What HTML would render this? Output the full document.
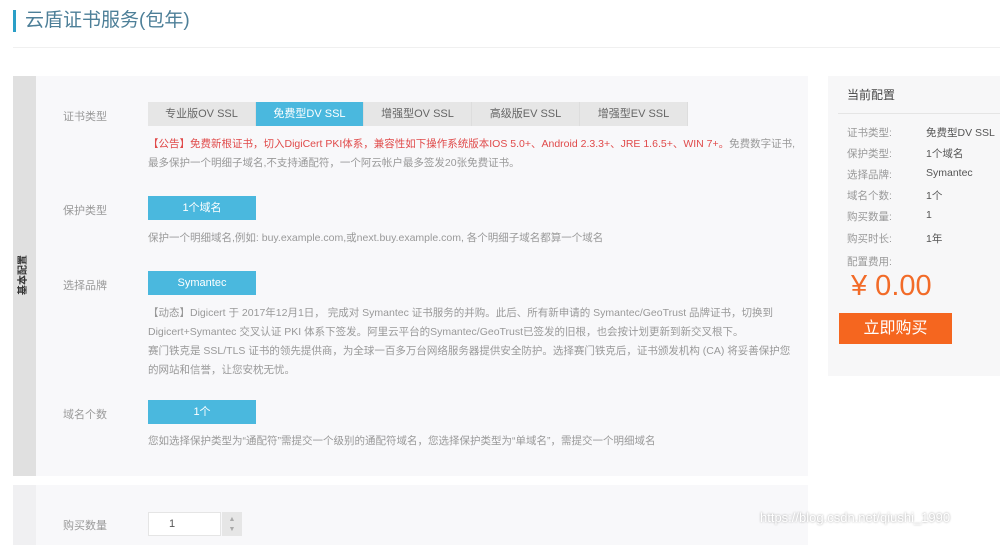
<!DOCTYPE html>
<html><head><meta charset="utf-8"><style>
*{margin:0;padding:0;box-sizing:border-box}
body{width:1000px;height:536px;overflow:hidden;background:#fff;font-family:"Liberation Sans","Noto Sans CJK SC",sans-serif;position:relative;color:#999}
.a{position:absolute}
.title{left:13px;top:10px;height:22px;border-left:3px solid #2a9fc7;padding-left:9px;font-size:19px;color:#4d7f98;line-height:22px}
.hr{left:13px;top:47px;width:987px;height:1px;background:#f0f0f0}
.panel{left:13px;top:76px;width:795px;height:400px;background:#f8f8fa}
.side{left:13px;top:76px;width:23px;height:400px;background:#e0e0e0}
.side span{position:absolute;left:-14px;top:193px;width:50px;text-align:center;transform:rotate(-90deg);font-size:10px;color:#333;font-weight:bold;line-height:12px}
.lbl{font-size:11px;color:#999;left:63px}
.tab{top:102px;height:24px;width:108px;background:#e6e6e6;font-size:11px;color:#666;text-align:center;line-height:24px;border-right:1px solid #ddd}
.on{background:#4ab8de;color:#fff}
.btn{left:148px;width:108px;height:24px;background:#4ab8de;color:#fff;font-size:11px;text-align:center;line-height:24px}
.t{left:148px;font-size:10.5px;line-height:19px;color:#999;width:650px}
.red{color:#e04a4a}
.p2{left:13px;top:485px;width:795px;height:60px;background:#f8f8fa}
.p2s{left:13px;top:485px;width:23px;height:60px;background:#f0f0f2}
.rp{left:828px;top:76px;width:172px;height:300px;background:#f7f7f8}
.rk{left:847px;font-size:10.5px;color:#999}
.rv{left:926px;font-size:10.5px;color:#555}
</style></head><body>
<div class="a title">云盾证书服务(包年)</div>
<div class="a hr"></div>
<div class="a panel"></div>
<div class="a side"><span>基本配置</span></div>
<div class="a lbl" style="top:108px">证书类型</div>
<div class="a tab" style="left:148px">专业版OV SSL</div>
<div class="a tab on" style="left:256px">免费型DV SSL</div>
<div class="a tab" style="left:364px">增强型OV SSL</div>
<div class="a tab" style="left:472px">高级版EV SSL</div>
<div class="a tab" style="left:580px">增强型EV SSL</div>
<div class="a t" style="top:135px"><span class="red">【公告】免费新根证书，切入DigiCert PKI体系，兼容性如下操作系统版本IOS 5.0+、Android 2.3.3+、JRE 1.6.5+、WIN 7+。</span>免费数字证书,最多保护一个明细子域名,不支持通配符，一个阿云帐户最多签发20张免费证书。</div>
<div class="a lbl" style="top:202px">保护类型</div>
<div class="a btn" style="top:196px">1个域名</div>
<div class="a t" style="top:229px">保护一个明细域名,例如: buy.example.com,或next.buy.example.com, 各个明细子域名都算一个域名</div>
<div class="a lbl" style="top:277px">选择品牌</div>
<div class="a btn" style="top:271px">Symantec</div>
<div class="a t" style="top:304px">【动态】Digicert 于 2017年12月1日， 完成对 Symantec 证书服务的并购。此后、所有新申请的 Symantec/GeoTrust 品牌证书，切换到 Digicert+Symantec 交叉认证 PKI 体系下签发。阿里云平台的Symantec/GeoTrust已签发的旧根，也会按计划更新到新交叉根下。<br>赛门铁克是 SSL/TLS 证书的领先提供商，为全球一百多万台网络服务器提供安全防护。选择赛门铁克后，证书颁发机构 (CA) 将妥善保护您的网站和信誉，让您安枕无忧。</div>
<div class="a lbl" style="top:406px">域名个数</div>
<div class="a btn" style="top:400px">1个</div>
<div class="a t" style="top:432px">您如选择保护类型为“通配符”需提交一个级别的通配符域名，您选择保护类型为“单域名”，需提交一个明细域名</div>
<div class="a p2"></div><div class="a p2s"></div>
<div class="a lbl" style="top:517px">购买数量</div>
<div class="a" style="left:148px;top:512px;width:73px;height:24px;background:#fff;border:1px solid #e5e5e5;font-size:11px;color:#555;padding:5px 0 0 20px">1</div>
<div class="a" style="left:222px;top:512px;width:20px;height:24px;background:#e6e6e6;font-size:7px;color:#aaa;text-align:center;line-height:10px;padding-top:3px">▲<br>▼</div>
<div class="a rp"></div>
<div class="a" style="left:847px;top:86px;font-size:12px;color:#444">当前配置</div>
<div class="a" style="left:838px;top:113px;width:162px;height:1px;background:#e5e5e5"></div>
<div class="a rk" style="top:125px">证书类型:</div><div class="a rv" style="top:125px">免费型DV SSL</div>
<div class="a rk" style="top:146px">保护类型:</div><div class="a rv" style="top:146px">1个域名</div>
<div class="a rk" style="top:167px">选择品牌:</div><div class="a rv" style="top:167px">Symantec</div>
<div class="a rk" style="top:188px">域名个数:</div><div class="a rv" style="top:188px">1个</div>
<div class="a rk" style="top:209px">购买数量:</div><div class="a rv" style="top:209px">1</div>
<div class="a rk" style="top:231px">购买时长:</div><div class="a rv" style="top:231px">1年</div>
<div class="a rk" style="top:254px">配置费用:</div>
<div class="a" style="left:851px;top:270px;font-size:29px;color:#f26b28">¥ 0.00</div>
<div class="a" style="left:839px;top:313px;width:113px;height:31px;background:#f5661f;color:#fff;font-size:16px;text-align:center;line-height:31px">立即购买</div>
<div class="a" style="left:760px;top:510px;font-size:13px;color:#fff;text-shadow:0 0 2px #999">https://blog.csdn.net/qiushi_1990</div>
</body></html>
